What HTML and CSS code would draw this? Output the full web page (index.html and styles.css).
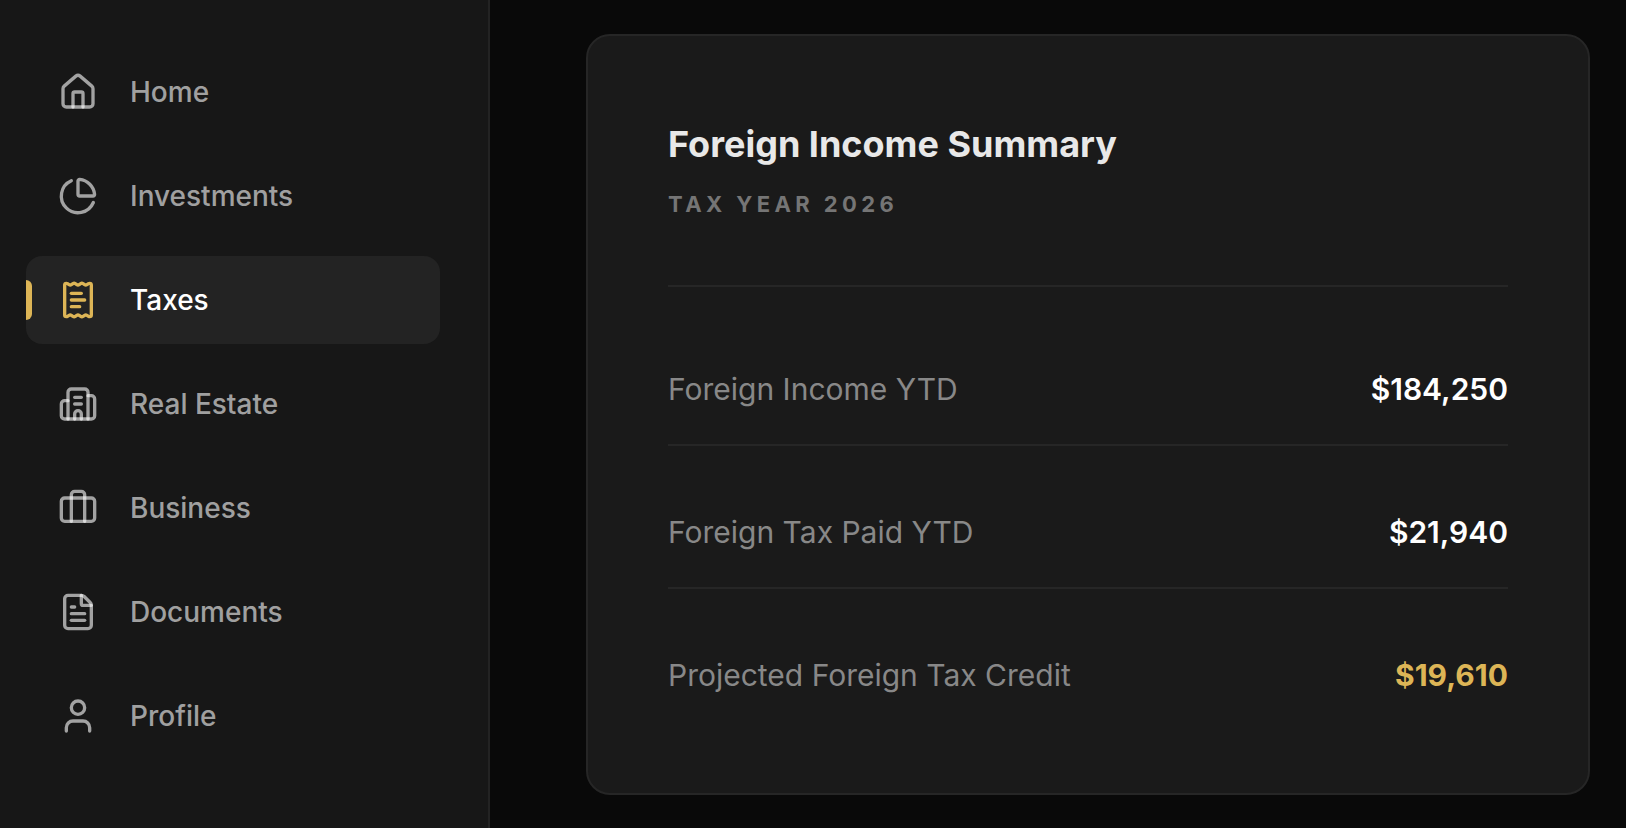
FILE: index.html
```html
<!DOCTYPE html>
<html lang="en">
<head>
  <meta charset="UTF-8" />
  <meta name="viewport" content="width=device-width, initial-scale=1.0" />
  <title>Taxes - Foreign Income Summary</title>
  <link rel="stylesheet" href="styles.css">
</head>
<body>
  <div class="layout">
    <nav class="sidebar">
      <a href="#home" class="nav-link">
        <svg class="icon" viewBox="0 0 24 24" aria-hidden="true">
          <path d="M15 21v-8a1 1 0 0 0-1-1h-4a1 1 0 0 0-1 1v8" />
          <path d="M3 10a2 2 0 0 1 .709-1.528l7-6a2 2 0 0 1 2.582 0l7 6A2 2 0 0 1 21 10v9a2 2 0 0 1-2 2H5a2 2 0 0 1-2-2z" />
        </svg>
        <span>Home</span>
      </a>
      <a href="#investments" class="nav-link">
        <svg class="icon" viewBox="0 0 24 24" aria-hidden="true">
          <path d="M21 12c.552 0 1.005-.449.95-.998a10 10 0 0 0-8.953-8.951c-.55-.055-.998.398-.998.95v8a1 1 0 0 0 1 1z" />
          <path d="M21.21 15.89A10 10 0 1 1 8 2.83" />
        </svg>
        <span>Investments</span>
      </a>
      <a href="#taxes" class="nav-link active" aria-current="page">
        <svg class="icon" viewBox="0 0 24 24" aria-hidden="true">
          <path d="M13 16H8" />
          <path d="M14 8H8" />
          <path d="M16 12H8" />
          <path d="M4 3a1 1 0 0 1 1-1 1.3 1.3 0 0 1 .7.2l.933.6a1.3 1.3 0 0 0 1.4 0l.934-.6a1.3 1.3 0 0 1 1.4 0l.933.6a1.3 1.3 0 0 0 1.4 0l.933-.6a1.3 1.3 0 0 1 1.4 0l.934.6a1.3 1.3 0 0 0 1.4 0l.933-.6A1.3 1.3 0 0 1 19 2a1 1 0 0 1 1 1v18a1 1 0 0 1-1 1 1.3 1.3 0 0 1-.7-.2l-.933-.6a1.3 1.3 0 0 0-1.4 0l-.934.6a1.3 1.3 0 0 1-1.4 0l-.933-.6a1.3 1.3 0 0 0-1.4 0l-.933.6a1.3 1.3 0 0 1-1.4 0l-.934-.6a1.3 1.3 0 0 0-1.4 0l-.933.6a1.3 1.3 0 0 1-.7.2 1 1 0 0 1-1-1z" />
        </svg>
        <span>Taxes</span>
      </a>
      <a href="#real-estate" class="nav-link">
        <svg class="icon" viewBox="0 0 24 24" aria-hidden="true">
          <path d="M10 12h4" />
          <path d="M10 8h4" />
          <path d="M14 21v-3a2 2 0 0 0-4 0v3" />
          <path d="M6 10H4a2 2 0 0 0-2 2v7a2 2 0 0 0 2 2h16a2 2 0 0 0 2-2V9a2 2 0 0 0-2-2h-2" />
          <path d="M6 21V5a2 2 0 0 1 2-2h8a2 2 0 0 1 2 2v16" />
        </svg>
        <span>Real Estate</span>
      </a>
      <a href="#business" class="nav-link">
        <svg class="icon" viewBox="0 0 24 24" aria-hidden="true">
          <path d="M16 20V4a2 2 0 0 0-2-2h-4a2 2 0 0 0-2 2v16" />
          <rect width="20" height="14" x="2" y="6" rx="2" />
        </svg>
        <span>Business</span>
      </a>
      <a href="#documents" class="nav-link">
        <svg class="icon" viewBox="0 0 24 24" aria-hidden="true">
          <path d="M6 22a2 2 0 0 1-2-2V4a2 2 0 0 1 2-2h8a2.4 2.4 0 0 1 1.704.706l3.588 3.588A2.4 2.4 0 0 1 20 8v12a2 2 0 0 1-2 2z" />
          <path d="M14 2v5a1 1 0 0 0 1 1h5" />
          <path d="M10 9H8" />
          <path d="M16 13H8" />
          <path d="M16 17H8" />
        </svg>
        <span>Documents</span>
      </a>
      <a href="#profile" class="nav-link">
        <svg class="icon" viewBox="0 0 24 24" aria-hidden="true">
          <path d="M19 21v-2a4 4 0 0 0-4-4H9a4 4 0 0 0-4 4v2" />
          <circle cx="12" cy="7" r="4" />
        </svg>
        <span>Profile</span>
      </a>
    </nav>

    <main class="content">
      <section class="card">
        <header class="card-header">
          <h1>Foreign Income Summary</h1>
          <p>TAX YEAR 2026</p>
        </header>
        <dl class="summary">
          <div class="row">
            <dt>Foreign Income YTD</dt>
            <dd>$184,250</dd>
          </div>
          <div class="row">
            <dt>Foreign Tax Paid YTD</dt>
            <dd>$21,940</dd>
          </div>
          <div class="row">
            <dt>Projected Foreign Tax Credit</dt>
            <dd class="credit">$19,610</dd>
          </div>
        </dl>
      </section>
    </main>
  </div>
</body>
</html>
```

FILE: styles.css
```css
* {
  box-sizing: border-box;
}
body {
  font-family: Inter, 'Liberation Sans', sans-serif;
  background-color: #090909;
  color: #fff;
  margin: 0;
}
.layout {
  display: flex;
  min-height: 100vh;
}

.sidebar {
  display: flex;
  flex-direction: column;
  gap: 16px;
  flex: 0 0 490px;
  padding: 48px 48px 16px 26px;
  background-color: #171717;
  border-right: 2px solid #232323;
}
.nav-link {
  position: relative;
  display: flex;
  align-items: center;
  gap: 32px;
  height: 88px;
  padding: 0 32px;
  border-radius: 16px;
  color: rgba(255, 255, 255, 0.6);
  font-size: 28px;
  font-weight: 500;
  text-decoration: none;
}
.nav-link:hover, .nav-link.active {
  background-color: #232323;
  color: #fff;
}
.nav-link.active::before {
  content: '';
  position: absolute;
  left: 0;
  top: 24px;
  width: 6px;
  height: 40px;
  border-radius: 0 6px 6px 0;
  background-color: #ddb556;
}
.icon {
  width: 40px;
  height: 40px;
  fill: none;
  stroke: currentColor;
  stroke-width: 2;
  stroke-linecap: round;
  stroke-linejoin: round;
}
.active .icon {
  color: #ddb556;
}

.content {
  flex: 1;
  padding: 34px 36px 16px 96px;
}
.card {
  padding: 80px;
  background-color: #1a1a1a;
  border: 2px solid #262626;
  border-radius: 24px;
}
.card-header {
  padding-bottom: 65px;
  border-bottom: 2px solid #262626;
}
.card-header h1 {
  margin: 0;
  color: #e8e8e8;
  font-size: 36px;
  font-weight: 700;
  line-height: 56px;
}
.card-header p {
  margin: 16px 0 0;
  color: #757575;
  font-size: 22px;
  font-weight: 700;
  line-height: 32px;
  letter-spacing: 0.2em;
}

.summary {
  margin: 16px 0 0;
}
.row {
  display: flex;
  justify-content: space-between;
  align-items: center;
  padding: 68px 0 37px;
  border-bottom: 2px solid #262626;
  font-size: 30px;
  line-height: 36px;
}
.row:last-child {
  padding-bottom: 20px;
  border-bottom: none;
}
.row dt {
  color: #888;
}
.row dd {
  margin: 0;
  font-weight: 600;
}
.row dd.credit {
  color: #ddb556;
  font-weight: 700;
}
```
